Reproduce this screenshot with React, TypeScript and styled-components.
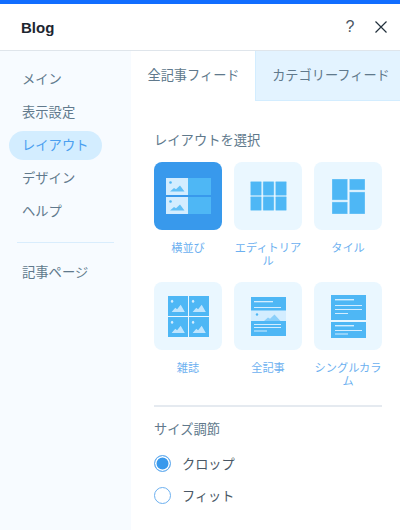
import React, { useState } from "react";
import styled, { createGlobalStyle } from "styled-components";

const GlobalStyle = createGlobalStyle`
  html, body {
    margin: 0;
    padding: 0;
    background: #fff;
    font-family: "Noto Sans CJK JP", "Noto Sans", sans-serif;
  }
  * { box-sizing: border-box; }
`;

const Panel = styled.div`
  width: 400px;
  height: 530px;
  overflow: hidden;
  display: flex;
  flex-direction: column;
  border-top: 4px solid #116dff;
  background: #fff;
`;

const Header = styled.header`
  height: 47px;
  flex: none;
  display: flex;
  align-items: center;
  padding: 0 7px 0 21px;
  border-bottom: 1px solid #dfe5eb;
`;

const Title = styled.h1`
  margin: 0;
  flex: 1;
  font-family: "Liberation Sans", Arial, sans-serif;
  font-size: 15px;
  font-weight: 700;
  color: #1c2530;
`;

const HeaderButton = styled.button`
  width: 24px;
  height: 24px;
  padding: 0;
  margin-left: 7px;
  border: 0;
  background: none;
  display: flex;
  align-items: center;
  justify-content: center;
  color: #4a5663;
  font-family: "Liberation Sans", Arial, sans-serif;
  font-size: 16px;
`;

const Body = styled.div`
  flex: 1;
  display: flex;
  min-height: 0;
`;

const Sidebar = styled.nav`
  width: 131px;
  flex: none;
  padding: 14px 0 0 9px;
  background: #f7fbff;
`;

const NavItem = styled.div<{ $active?: boolean }>`
  width: 93px;
  height: 29px;
  margin-bottom: 4px;
  padding: 0 0 2px 13px;
  border-radius: 15px;
  display: flex;
  align-items: center;
  font-size: 13.3px;
  white-space: nowrap;
  color: ${({ $active }) => ($active ? "#4a9ff0" : "#60798c")};
  background: ${({ $active }) => ($active ? "#d3edff" : "transparent")};
`;

const NavDivider = styled.div`
  width: 97px;
  height: 1px;
  margin: 16px 0 15px 8px;
  background: #d9edfd;
`;

const Content = styled.main`
  flex: 1;
  min-width: 0;
  display: flex;
  flex-direction: column;
`;

const Tabs = styled.div`
  display: flex;
  height: 50px;
  flex: none;
`;

const Tab = styled.div<{ $active?: boolean }>`
  display: flex;
  align-items: center;
  justify-content: center;
  padding-bottom: 3px;
  padding-left: ${({ $active }) => ($active ? "1px" : "6px")};
  font-size: 13.2px;
  white-space: nowrap;
  color: #60798c;
  width: ${({ $active }) => ($active ? "124px" : "145px")};
  background: ${({ $active }) => ($active ? "#fff" : "#e3f3ff")};
  border-left: ${({ $active }) => ($active ? "0" : "1px solid #d3edff")};
  border-bottom: ${({ $active }) => ($active ? "0" : "1px solid #d3edff")};
`;

const Section = styled.section`
  padding: 29px 18px 0 23px;
`;

const SectionTitle = styled.h2`
  margin: 0;
  font-size: 13.3px;
  font-weight: 400;
  line-height: 20px;
  color: #60798c;
`;

const LayoutGrid = styled.div`
  display: grid;
  grid-template-columns: repeat(3, 68px);
  column-gap: 12px;
  margin-top: 12px;
`;

const LayoutOption = styled.div`
  height: 120px;
  display: flex;
  flex-direction: column;
  align-items: center;
`;

const Thumb = styled.div<{ $selected?: boolean }>`
  width: 68px;
  height: 68px;
  border-radius: 8px;
  display: flex;
  align-items: center;
  justify-content: center;
  background: ${({ $selected }) => ($selected ? "#3899ec" : "#eaf7ff")};
`;

const OptionLabel = styled.div`
  margin-top: 11px;
  width: 68px;
  text-align: center;
  font-size: 11.2px;
  line-height: 13px;
  color: #6cb0f0;
`;

const Divider = styled.div`
  height: 2px;
  margin-top: 3px;
  background: #e5eaf0;
`;

const SizeTitle = styled(SectionTitle)`
  margin-top: 12px;
`;

const RadioGroup = styled.div`
  margin-top: 16px;
  display: flex;
  flex-direction: column;
  gap: 15px;
`;

const RadioRow = styled.label`
  display: flex;
  align-items: center;
  height: 17px;
  font-size: 13.2px;
  color: #4a5866;
`;

const RadioDot = styled.span<{ $checked?: boolean }>`
  width: 17px;
  height: 17px;
  flex: none;
  margin-right: 11px;
  border-radius: 50%;
  border: 1px solid #6cb0f0;
  background: ${({ $checked }) => ($checked ? "#3899ec" : "#fff")};
  box-shadow: ${({ $checked }) => ($checked ? "inset 0 0 0 1.5px #fff" : "none")};
`;

const FILL = "#4eb7f5";
const PALE = "#d3edff";
const EDGE = "#a9dcfb";

const Picture = ({ x, y, w, h, bg, fg, dot }: { x: number; y: number; w: number; h: number; bg: string; fg: string; dot: string }) => (
  <g transform={`translate(${x} ${y}) scale(${w / 22} ${h / 17})`}>
    <rect width="22" height="17" fill={bg} />
    <circle cx="4.5" cy="4.5" r="1.3" fill={dot} />
    <path d="M4 13.5l4-3.5 2 1.2 4-3.7 4.5 6z" fill={fg} opacity="0.85" />
  </g>
);

const RowsIcon = () => (
  <svg width="45" height="36" viewBox="0 0 45 36">
    <rect width="45" height="17" fill={FILL} />
    <rect y="19" width="45" height="17" fill={FILL} />
    <Picture x={0} y={0} w={22} h={17} bg={PALE} fg={FILL} dot={FILL} />
    <Picture x={0} y={19} w={22} h={17} bg={PALE} fg={FILL} dot={FILL} />
  </svg>
);

const EditorialIcon = () => (
  <svg width="37" height="30" viewBox="0 0 37 30">
    {[0.5, 13, 25.5].map((x) =>
      [0.5, 15.5].map((y) => (
        <rect key={`${x}-${y}`} x={x} y={y} width="11" height="14" rx="0.8" fill={FILL} stroke={EDGE} strokeWidth="0.5" />
      )),
    )}
  </svg>
);

const TileIcon = () => (
  <svg width="33" height="35" viewBox="0 0 33 35">
    <rect x="0" y="0" width="15.5" height="21" fill={FILL} stroke={EDGE} strokeWidth="0.5" />
    <rect x="17.5" y="0" width="15.5" height="11" fill={FILL} stroke={EDGE} strokeWidth="0.5" />
    <rect x="0" y="23" width="15.5" height="12" fill={FILL} stroke={EDGE} strokeWidth="0.5" />
    <rect x="17.5" y="13" width="15.5" height="22" fill={FILL} stroke={EDGE} strokeWidth="0.5" />
  </svg>
);

const MagazineIcon = () => (
  <svg width="41" height="41" viewBox="0 0 41 41">
    {[0, 21].map((x) =>
      [0, 21].map((y) => (
        <Picture key={`${x}-${y}`} x={x} y={y} w={20} h={20} bg={FILL} fg={PALE} dot={PALE} />
      )),
    )}
  </svg>
);

const ArticleIcon = () => (
  <svg width="35" height="39" viewBox="0 0 35 39">
    <rect width="35" height="39" fill={FILL} />
    <rect x="3" y="4" width="19" height="1.3" fill={PALE} />
    <rect x="3" y="10" width="27" height="1" fill={PALE} />
    <rect y="13.5" width="35" height="10.5" fill={PALE} />
    <circle cx="6" cy="17.5" r="1.2" fill={FILL} />
    <path d="M13 24l4-3.5 2 1.2 4.5-4.2 6 6.5z" fill={FILL} opacity="0.55" />
    <rect x="3" y="27" width="27" height="1" fill={PALE} />
    <rect x="3" y="30" width="27" height="1" fill={PALE} />
    <rect x="3" y="33.5" width="13" height="1" fill={PALE} />
  </svg>
);

const ColumnIcon = () => (
  <svg width="35" height="43" viewBox="0 0 35 43">
    <rect width="35" height="25" fill={FILL} />
    <rect y="27" width="35" height="16" fill={FILL} />
    <rect x="4" y="4" width="19" height="1.4" fill={PALE} />
    <rect x="4" y="10" width="27" height="1" fill={PALE} />
    <rect x="4" y="14" width="27" height="1" fill={PALE} />
    <rect x="4" y="18" width="13" height="1" fill={PALE} />
    <rect x="4" y="30" width="19" height="1.4" fill={PALE} />
    <rect x="4" y="35" width="27" height="1" fill={PALE} />
    <rect x="4" y="38.5" width="13" height="1" fill={PALE} />
  </svg>
);

const navTop = ["メイン", "表示設定", "レイアウト", "デザイン", "ヘルプ"];

const layouts = [
  { name: "横並び", icon: <RowsIcon /> },
  { name: "エディトリアル", icon: <EditorialIcon /> },
  { name: "タイル", icon: <TileIcon /> },
  { name: "雑誌", icon: <MagazineIcon /> },
  { name: "全記事", icon: <ArticleIcon /> },
  { name: "シングルカラム", icon: <ColumnIcon /> },
];

const App = () => {
  const [selected] = useState("横並び");

  return (
    <Panel>
      <GlobalStyle />
      <Header>
        <Title>Blog</Title>
        <HeaderButton>?</HeaderButton>
        <HeaderButton>
          <svg width="12" height="12" viewBox="0 0 12 12">
            <path d="M.5.5l11 11M11.5.5l-11 11" stroke="#22303c" strokeWidth="1.2" />
          </svg>
        </HeaderButton>
      </Header>
      <Body>
        <Sidebar>
          {navTop.map((item) => (
            <NavItem key={item} $active={item === "レイアウト"}>
              {item}
            </NavItem>
          ))}
          <NavDivider />
          <NavItem>記事ページ</NavItem>
        </Sidebar>
        <Content>
          <Tabs>
            <Tab $active>全記事フィード</Tab>
            <Tab>カテゴリーフィード</Tab>
          </Tabs>
          <Section>
            <SectionTitle>レイアウトを選択</SectionTitle>
            <LayoutGrid>
              {layouts.map((layout) => (
                <LayoutOption key={layout.name}>
                  <Thumb $selected={layout.name === selected}>{layout.icon}</Thumb>
                  <OptionLabel>{layout.name}</OptionLabel>
                </LayoutOption>
              ))}
            </LayoutGrid>
            <Divider />
            <SizeTitle>サイズ調節</SizeTitle>
            <RadioGroup>
              <RadioRow>
                <RadioDot $checked />
                クロップ
              </RadioRow>
              <RadioRow>
                <RadioDot />
                フィット
              </RadioRow>
            </RadioGroup>
          </Section>
        </Content>
      </Body>
    </Panel>
  );
};

export default App;
